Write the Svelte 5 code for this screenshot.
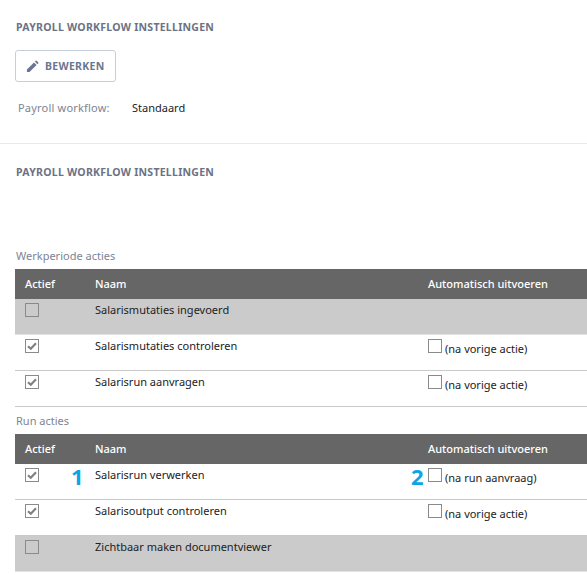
<script>
  const werkperiode = [
    { actief: false, naam: "Salarismutaties ingevoerd", disabled: true },
    { actief: true, naam: "Salarismutaties controleren", auto: "(na vorige actie)" },
    { actief: true, naam: "Salarisrun aanvragen", auto: "(na vorige actie)" }
  ];
  const run = [
    { actief: true, naam: "Salarisrun verwerken", auto: "(na run aanvraag)", nr: 1 },
    { actief: true, naam: "Salarisoutput controleren", auto: "(na vorige actie)" },
    { actief: false, naam: "Zichtbaar maken documentviewer", disabled: true }
  ];
  const groups = [
    { titel: "Werkperiode acties", rijen: werkperiode },
    { titel: "Run acties", rijen: run }
  ];
</script>

<div class="page">
  <section class="top">
    <h2>PAYROLL WORKFLOW INSTELLINGEN</h2>
    <button class="edit">
      <svg width="13" height="13" viewBox="0 0 14 14">
        <path d="M1 13V10.2L8.6 2.6L11.4 5.4L3.8 13Z M9.5 1.7L10.6 0.7Q11 0.4 11.4 0.7L13.3 2.6Q13.6 3 13.3 3.4L12.3 4.5Z" fill="#6b7690" />
      </svg>
      BEWERKEN
    </button>
    <div class="info">
      <span class="lbl">Payroll workflow:</span>
      <span>Standaard</span>
    </div>
  </section>

  <section class="bottom">
    <h2>PAYROLL WORKFLOW INSTELLINGEN</h2>
    {#each groups as group}
      <div class="caption">{group.titel}</div>
      <div class="table">
        <div class="row head">
          <div>Actief</div>
          <div>Naam</div>
          <div>Automatisch uitvoeren</div>
        </div>
        {#each group.rijen as rij}
          <div class="row" class:disabled={rij.disabled}>
            <div class="c1">
              <span class="box">
                {#if rij.actief}
                  <svg width="10" height="10" viewBox="0 0 10 10">
                    <path d="M1 5.2L3.8 7.8L9 2.2" fill="none" stroke="#808080" stroke-width="2.2" />
                  </svg>
                {/if}
              </span>
              {#if rij.nr}<span class="nr one">1</span>{/if}
            </div>
            <div class="c2">{rij.naam}</div>
            <div class="c3">
              {#if rij.auto}
                {#if rij.nr}<span class="nr two">2</span>{/if}
                <span class="box open"></span>
                <span class="auto">{rij.auto}</span>
              {/if}
            </div>
          </div>
        {/each}
      </div>
    {/each}
  </section>
</div>

<style>
  :global(body) {
    margin: 0;
    background: #fff;
  }
  .page {
    width: 587px;
    height: 575px;
    overflow: hidden;
    font-family: "Noto Sans", sans-serif;
    font-size: 11px;
    color: #222;
  }
  h2 {
    margin: 0;
    font-size: 10.5px;
    line-height: 14px;
    font-weight: 700;
    letter-spacing: 0.27px;
    color: #6b7285;
  }
  .top {
    height: 144px;
    box-sizing: border-box;
    padding: 20px 0 0 16px;
    border-bottom: 1px solid #e6e9f0;
  }
  .edit {
    display: flex;
    align-items: center;
    gap: 6px;
    width: 101px;
    height: 32px;
    margin: 16px 0 0 -1px;
    padding: 0 0 0 10px;
    box-sizing: border-box;
    background: #fff;
    border: 1px solid #c5cfdc;
    border-radius: 3px;
    font: 700 10.5px "Noto Sans", sans-serif;
    letter-spacing: 0.3px;
    color: #6b7690;
  }
  .info {
    display: flex;
    margin: 18px 0 0 2px;
    line-height: 16px;
  }
  .lbl {
    width: 114px;
    color: #7d8494;
    letter-spacing: 0.2px;
  }
  .bottom {
    padding: 21px 0 0 15px;
  }
  .bottom h2 {
    margin-left: 1px;
  }
  .caption {
    color: #7d8494;
    line-height: 14px;
    padding-left: 1px;
    margin-bottom: 6px;
  }
  .bottom h2 + .caption {
    margin-top: 70px;
  }
  .table + .caption {
    margin-top: 7px;
  }
  .row {
    display: grid;
    grid-template-columns: 70px 333px 1fr;
    height: 36px;
    box-sizing: border-box;
    padding-left: 10px;
    border-bottom: 1px solid #c9c9c9;
    line-height: 16px;
  }
  .head {
    height: 30px;
    align-items: center;
    background: #666;
    color: #fff;
    border: 0;
    font-weight: 500;
  }
  .disabled {
    background: #cbcbcb;
    border-bottom-color: #e2e2e2;
  }
  .c1,
  .c2,
  .c3 {
    position: relative;
  }
  .c1,
  .c3 {
    padding-top: 4px;
  }
  .c2 {
    padding-top: 3px;
  }
  .c3 {
    display: flex;
    align-items: flex-start;
  }
  .box {
    display: flex;
    align-items: center;
    justify-content: center;
    width: 14px;
    height: 14px;
    box-sizing: border-box;
    border: 1px solid #8a8a8a;
    background: #fff;
  }
  .disabled .box {
    background: transparent;
  }
  .open {
    flex: none;
  }
  .auto {
    margin: 2px 0 0 3px;
  }
  .nr {
    position: absolute;
    color: #0ba5e6;
    font-size: 22px;
    font-weight: 700;
    line-height: 24px;
  }
  .one {
    left: 46px;
    top: 0;
  }
  .two {
    left: -17px;
    top: 0;
  }
</style>
